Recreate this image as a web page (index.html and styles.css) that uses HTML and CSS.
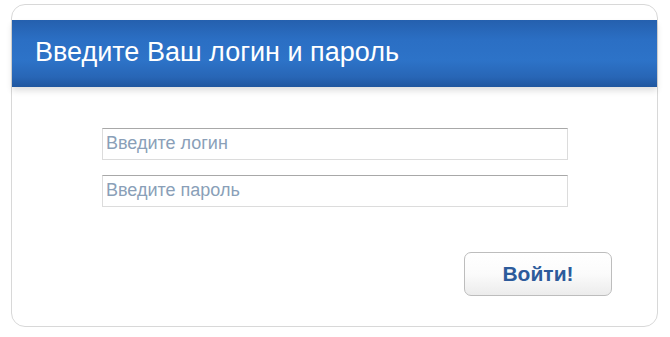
FILE: index.html
```html
<!DOCTYPE html>
<html lang="ru">
<head>
    <meta charset="UTF-8">
    <title>Вход</title>
    <link rel="stylesheet" href="styles.css">
</head>
<body>
    <form class="login" onsubmit="event.preventDefault();">
        <h1 class="login-title">Введите Ваш логин и пароль</h1>

        <div class="login-fields">
            <input type="text" class="login-input" placeholder="Введите логин">
            <input type="password" class="login-input" placeholder="Введите пароль">
        </div>

        <div class="login-actions">
            <button type="submit" class="login-button">Войти!</button>
        </div>
    </form>
</body>
</html>
```

FILE: styles.css
```css
body {
    font-family: "Liberation Sans", Arial, sans-serif;
    background-color: #fff;
    margin: 0;
    padding: 0;
}

.login {
    box-sizing: border-box;
    width: 647px;
    height: 323px;
    margin: 4px 0 0 11px;
    padding-top: 15px;
    background-color: #fff;
    border: 1px solid #d8d8d8;
    border-radius: 14px;
}

.login-title {
    margin: 0;
    height: 67px;
    padding-left: 23px;
    line-height: 64px;
    font-size: 27px;
    font-weight: normal;
    color: #fff;
    background: linear-gradient(to bottom, #2560ae 0%, #2b6fc4 30%, #2d73c8 60%, #2866b6 85%, #20579f 100%);
    box-shadow: 0 4px 6px rgba(0, 0, 0, 0.12);
}

.login-fields {
    display: flex;
    flex-direction: column;
    gap: 15px;
    margin: 41px 0 0 90px;
}

.login-input {
    box-sizing: border-box;
    width: 466px;
    height: 32px;
    padding: 0 3px 1px;
    font-family: "Liberation Sans", Arial, sans-serif;
    font-size: 18px;
    color: #333;
    border: 1px solid #dcdcdc;
    border-top-color: #a8a8a8;
    border-radius: 0;
    outline: none;
}

.login-input::placeholder {
    color: #8a9fb8;
}

.login-actions {
    display: flex;
    justify-content: flex-end;
    margin: 45px 45px 0 0;
}

.login-button {
    width: 148px;
    height: 44px;
    font-family: "Liberation Sans", Arial, sans-serif;
    font-size: 21px;
    font-weight: bold;
    color: #2d5b9b;
    background: linear-gradient(to bottom, #ffffff 0%, #fbfbfb 50%, #ececec 100%);
    border: 1px solid #bdbdbd;
    border-radius: 7px;
    cursor: pointer;
}
```
